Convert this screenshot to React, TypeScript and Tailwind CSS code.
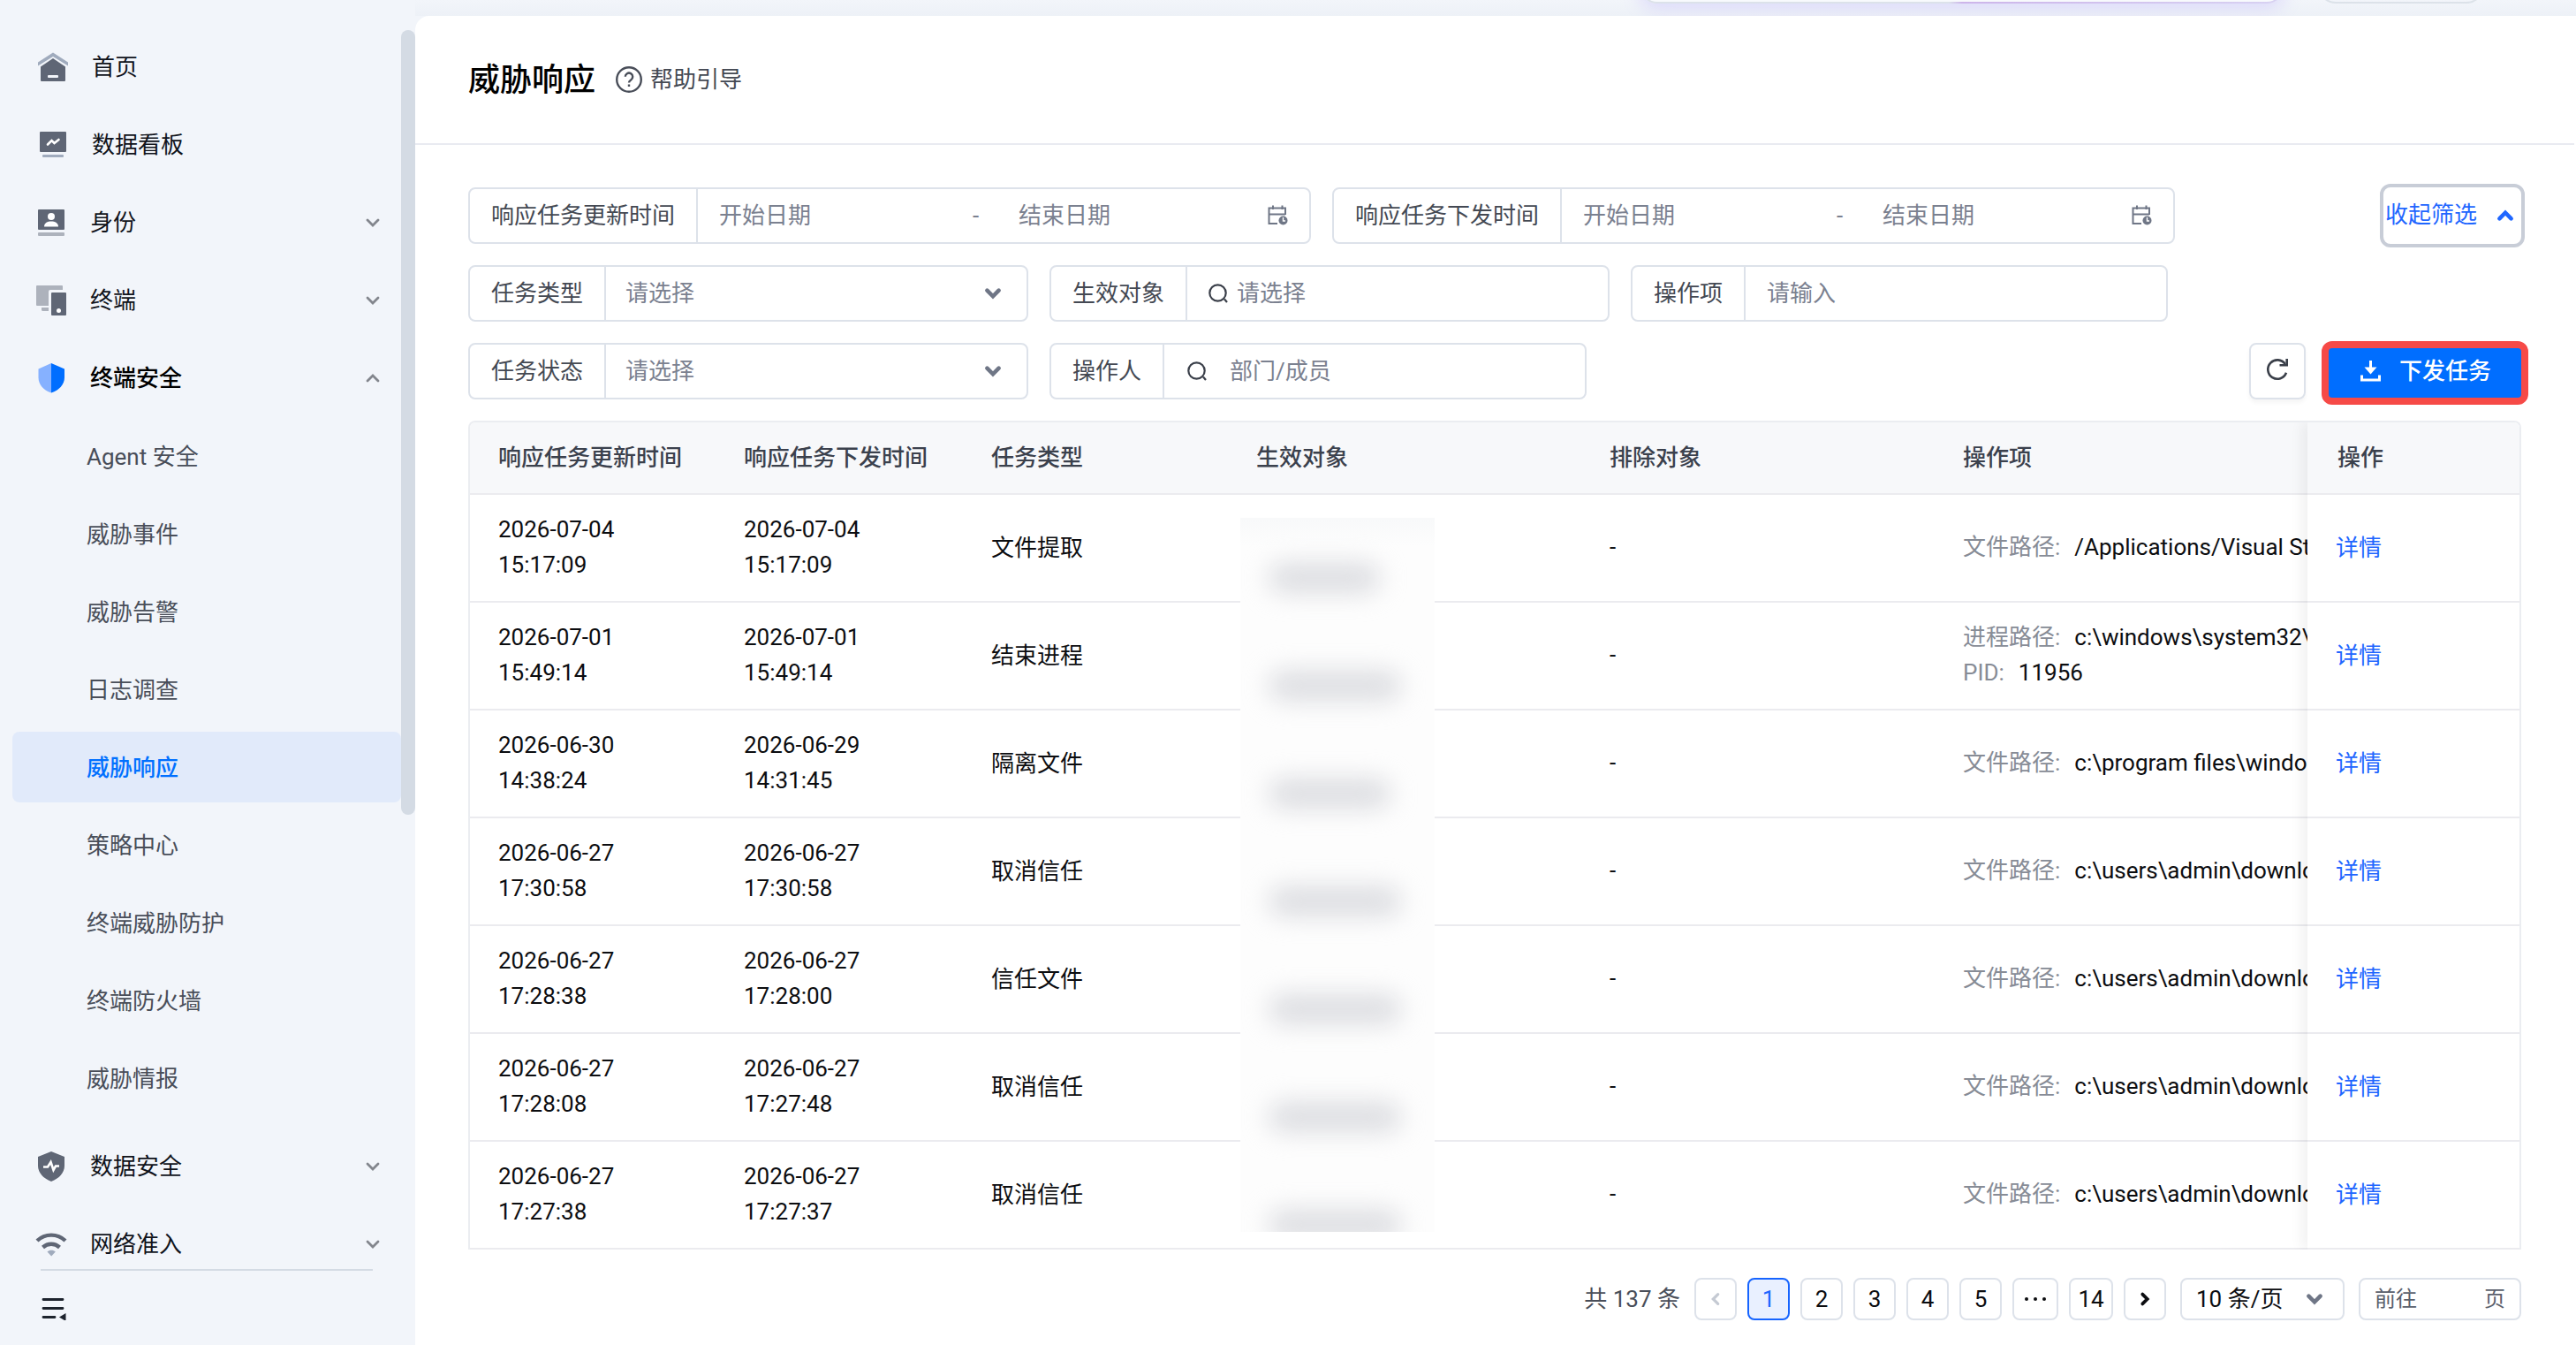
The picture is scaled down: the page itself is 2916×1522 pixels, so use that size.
import { clsx } from "clsx";

const SUB_ITEMS = ["Agent 安全", "威胁事件", "威胁告警", "日志调查", "威胁响应", "策略中心", "终端威胁防护", "终端防火墙", "威胁情报"];

type Pair = [string, string];

type Row = {
    updated: Pair;
    issued: Pair;
    type: string;
    detail: Pair[];
};

const ROWS: Row[] = [
    { updated: ["2026-07-04", "15:17:09"], issued: ["2026-07-04", "15:17:09"], type: "文件提取", detail: [["文件路径:", "/Applications/Visual St"]] },
    { updated: ["2026-07-01", "15:49:14"], issued: ["2026-07-01", "15:49:14"], type: "结束进程", detail: [["进程路径:", "c:\\windows\\system32\\"], ["PID:", "11956"]] },
    { updated: ["2026-06-30", "14:38:24"], issued: ["2026-06-29", "14:31:45"], type: "隔离文件", detail: [["文件路径:", "c:\\program files\\windo"]] },
    { updated: ["2026-06-27", "17:30:58"], issued: ["2026-06-27", "17:30:58"], type: "取消信任", detail: [["文件路径:", "c:\\users\\admin\\downlo"]] },
    { updated: ["2026-06-27", "17:28:38"], issued: ["2026-06-27", "17:28:00"], type: "信任文件", detail: [["文件路径:", "c:\\users\\admin\\downlo"]] },
    { updated: ["2026-06-27", "17:28:08"], issued: ["2026-06-27", "17:27:48"], type: "取消信任", detail: [["文件路径:", "c:\\users\\admin\\downlo"]] },
    { updated: ["2026-06-27", "17:27:38"], issued: ["2026-06-27", "17:27:37"], type: "取消信任", detail: [["文件路径:", "c:\\users\\admin\\downlo"]] },
];

const MASK_WIDTHS = ["w-[126px]", "w-[150px]", "w-[138px]", "w-[150px]", "w-[150px]", "w-[150px]", "w-[150px]"];

const COLUMNS = "grid grid-cols-[278px_280px_300px_400px_400px_1fr]";

function Chevron({ className, up = false, width = 2 }: { className?: string; up?: boolean; width?: number }) {
    return (
        <svg viewBox="0 0 20 20" fill="none" stroke="currentColor" strokeWidth={width} strokeLinecap="round" strokeLinejoin="miter" className={clsx("shrink-0", className)}>
            <path d={up ? "M4 13L10 7L16 13" : "M4 7L10 13L16 7"} />
        </svg>
    );
}

/* ---------- sidebar icons, all on a 36px box ---------- */

function HomeIcon() {
    return (
        <svg viewBox="0 0 36 36" className="size-9">
            <path d="M1 16.500V12.500L18 1.500L35 12.500V16.500L18 6Z" fill="#a0abbd" />
            <path d="M4 17.500L18 8L32 17.500V33a1 1 0 0 1-1 1H5a1 1 0 0 1-1-1Z" fill="#5f6675" />
            <rect x="12" y="27" width="12" height="3" rx="1" fill="#f2f5fa" />
        </svg>
    );
}

function BoardIcon() {
    return (
        <svg viewBox="0 0 36 36" className="size-9">
            <rect x="3" y="3" width="30" height="23" rx="1" fill="#5f6675" />
            <path d="M12 17.500L16.500 13L19.500 16L24.500 12" fill="none" stroke="#fff" strokeWidth="2.600" strokeLinecap="round" />
            <rect x="6" y="29" width="24" height="3" rx="1" fill="#a0abbd" />
        </svg>
    );
}

function IdentityIcon() {
    return (
        <svg viewBox="0 0 36 36" className="size-9">
            <rect x="3" y="3" width="30" height="23" rx="1" fill="#5f6675" />
            <circle cx="18" cy="11" r="4" fill="#fff" />
            <path d="M10 22.500c0-4 3.500-6 8-6s8 2 8 6Z" fill="#fff" />
            <rect x="3" y="29" width="30" height="4" rx="1" fill="#adb2bc" />
        </svg>
    );
}

function DeviceIcon() {
    return (
        <svg viewBox="0 0 36 36" className="size-9">
            <path d="M2 1H30a1 1 0 0 1 1 1V6H17a2 2 0 0 0-2 2V24H2a1 1 0 0 1-1-1V2A1 1 0 0 1 2 1Z" fill="#adb2bc" />
            <path d="M7 26H15V30H8.500A1.500 1.500 0 0 1 7 28.500Z" fill="#adb2bc" />
            <rect x="18" y="9" width="17" height="26" rx="1" fill="#5f6675" />
            <circle cx="26.500" cy="29.500" r="2.500" fill="#fff" />
        </svg>
    );
}

function ShieldIcon() {
    return (
        <svg viewBox="0 0 36 36" className="size-9">
            <path d="M18 1L3.500 7.500V17C3.500 25 9 31.500 18 34.500Z" fill="#86b1ff" />
            <path d="M18 1L33 7.500V17C33 25 27 31.500 18 34.500Z" fill="#006eff" />
        </svg>
    );
}

function DataShieldIcon() {
    return (
        <svg viewBox="0 0 36 36" className="size-9">
            <path d="M18 1L33 7V17C33 25 27 31.500 18 35C9 31.500 3 25 3 17V7Z" fill="#5f6675" />
            <path d="M9 18.500H14L17.500 13L20.500 22L23 17.500H27" fill="none" stroke="#fff" strokeWidth="2.600" />
        </svg>
    );
}

function WifiIcon() {
    return (
        <svg viewBox="0 0 36 36" className="size-9">
            <path d="M2 14C11 5.500 25 5.500 34 14" fill="none" stroke="#5f6675" strokeWidth="4.400" />
            <path d="M8.500 21.500C14 16.500 22 16.500 27.500 21.500" fill="none" stroke="#5f6675" strokeWidth="4.400" />
            <path d="M13.500 26.500C16 24 20.500 24 22.800 26.500L18.200 31.500Z" fill="#a0abbd" />
        </svg>
    );
}

function NavItem({ icon, label, arrow, bold, className = "pl-10" }: { icon: React.ReactNode; label: string; arrow?: "up" | "down"; bold?: boolean; className?: string }) {
    return (
        <div className={clsx("flex h-[88px] items-center gap-[26px] pr-[22px] text-[#10131b]", className)}>
            {icon}
            <span className={clsx("flex-1", bold && "font-medium text-black")}>{label}</span>
            {arrow && <Chevron up={arrow === "up"} className="size-5 text-[#83868d]" width={2.8} />}
        </div>
    );
}

function Sidebar() {
    return (
        <aside className="flex w-[470px] shrink-0 flex-col">
            <div className="flex h-[1436px] overflow-hidden pt-8">
                <nav className="w-[454px]">
                    <NavItem icon={<HomeIcon />} label="首页" className="pl-[42px]" />
                    <NavItem icon={<BoardIcon />} label="数据看板" className="pl-[42px]" />
                    <NavItem icon={<IdentityIcon />} label="身份" arrow="down" />
                    <NavItem icon={<DeviceIcon />} label="终端" arrow="down" />
                    <NavItem icon={<ShieldIcon />} label="终端安全" arrow="up" bold />
                    <div className="flex flex-col gap-2 pb-4 pl-3.5 pt-1">
                        {SUB_ITEMS.map((item) => (
                            <div
                                key={item}
                                className={clsx(
                                    "flex h-20 items-center rounded-lg pl-[84px] pt-0.5",
                                    item === "威胁响应" ? "bg-[#e1eafa] font-medium text-[#0070ff]" : "text-[#494e59]"
                                )}
                            >
                                {item}
                            </div>
                        ))}
                    </div>
                    <NavItem icon={<DataShieldIcon />} label="数据安全" arrow="down" />
                    <NavItem icon={<WifiIcon />} label="网络准入" arrow="down" />
                </nav>
                <div className="mt-0.5 h-[888px] w-4 rounded-full bg-[#d4dbe4]" />
            </div>
            <div className="ml-[46px] h-0.5 w-[376px] bg-[#d4dbe4]" />
            <svg viewBox="0 0 28 28" className="ml-[47px] mt-7 size-7 text-[#1d232d]">
                <path d="M2 4.500H24M2 14.500H24M2 24.500H15" stroke="currentColor" strokeWidth="2.800" strokeLinecap="round" />
                <path d="M20 24.500L27.500 20V29Z" fill="currentColor" />
            </svg>
        </aside>
    );
}

function CalendarIcon() {
    return (
        <svg viewBox="0 0 24 24" fill="none" stroke="#6f7686" strokeWidth="2" className="size-6">
            <path d="M21 11V3.500H2.500V21H12M2.500 10.500H21M7 0.500V5M17.500 0.500V5" />
            <circle cx="18.500" cy="17.500" r="5" fill="#6f7686" stroke="none" />
            <path d="M18.500 14V18H21" stroke="#fff" strokeWidth="1.400" />
        </svg>
    );
}

function SearchIcon() {
    return (
        <svg viewBox="0 0 24 24" fill="none" stroke="#3a3f49" strokeWidth="2.200" className="size-6">
            <circle cx="10.500" cy="11.500" r="9.200" />
            <path d="M18 18.500L21 22" />
        </svg>
    );
}

function Field({ label, children, className }: { label: string; children: React.ReactNode; className?: string }) {
    return (
        <div className="flex h-16 rounded-lg border-2 border-[#dde2ea]">
            <div className="border-r-2 border-[#dde2ea] px-6 leading-[60px] text-[#444953]">{label}</div>
            <div className={clsx("flex items-center leading-[58px] text-[#7b8190]", className)}>{children}</div>
        </div>
    );
}

function DateRange({ label }: { label: string }) {
    return (
        <Field label={label} className="w-[692px] px-6">
            <span className="w-[287px]">开始日期</span>
            <span className="w-[52px]">-</span>
            <span className="flex-1">结束日期</span>
            <CalendarIcon />
        </Field>
    );
}

function SelectField({ label }: { label: string }) {
    return (
        <Field label={label} className="w-[476px] pl-[22px] pr-[27px]">
            <span className="flex-1">请选择</span>
            <Chevron className="size-[22px] text-[#6f7686]" width={4.2} />
        </Field>
    );
}

function Filters() {
    return (
        <div className="flex justify-between pt-12">
            <div className="flex flex-col gap-6">
                <div className="flex gap-6">
                    <DateRange label="响应任务更新时间" />
                    <DateRange label="响应任务下发时间" />
                </div>
                <div className="flex gap-6">
                    <SelectField label="任务类型" />
                    <Field label="生效对象" className="w-[476px] gap-2 pl-6">
                        <SearchIcon />
                        <span>请选择</span>
                    </Field>
                    <Field label="操作项" className="w-[476px] pl-6">
                        请输入
                    </Field>
                </div>
                <div className="flex gap-6">
                    <SelectField label="任务状态" />
                    <Field label="操作人" className="w-[476px] gap-6 pl-[26px]">
                        <SearchIcon />
                        <span>部门/成员</span>
                    </Field>
                </div>
            </div>
            <div className="-mr-2 -mt-1 flex flex-col items-end justify-between">
                <button className="mr-1 flex h-[72px] w-[164px] items-center rounded-xl border-4 border-[#c8cdd7] pl-0.5 text-[#1f66ff]">
                    <span className="-mt-0.5 flex-1 text-left">收起筛选</span>
                    <Chevron up className="mr-[7px] size-[22px]" width={4.2} />
                </button>
                <div className="-mb-1.5 flex items-center gap-[18px]">
                    <button className="-mt-1 flex size-16 items-center justify-center rounded-lg border-2 border-[#dde2ea] shadow-[0_4px_4px_rgba(0,0,0,0.04)]">
                        <svg viewBox="0 0 28 28" fill="none" stroke="#3a3f49" strokeWidth="2.600" className="-mt-1 size-7">
                            <path d="M24 17.800A10.700 10.700 0 1 1 22.800 8" />
                            <path d="M24.700 2V9.300H16.500" />
                        </svg>
                    </button>
                    <button className="flex h-[72px] w-[234px] items-center rounded-xl border-8 border-[#f64a47] bg-[#006eff] pb-1 pl-[35px] font-medium text-white">
                        <svg viewBox="0 0 24 24" fill="none" stroke="currentColor" strokeWidth="3" className="mr-[21px] size-6">
                            <path d="M12.500 0V12M2.500 16.500V22H22.500V16.500" />
                            <path d="M5.500 7.500L12.500 15.500L19.500 7.500Z" fill="currentColor" stroke="none" />
                        </svg>
                        下发任务
                    </button>
                </div>
            </div>
        </div>
    );
}

function Table() {
    return (
        <div className="relative mt-6 flex overflow-hidden rounded-t-lg border-2 border-b-0 border-[#ebedf1]">
            <div className="w-[2080px] overflow-hidden">
                <div className={clsx(COLUMNS, "h-[82px] border-b-2 border-[#ebebef] bg-[#f7f8fa] font-medium leading-[80px] text-[#3b414d]")}>
                    {["响应任务更新时间", "响应任务下发时间", "任务类型", "生效对象", "排除对象", "操作项"].map((title) => (
                        <div key={title} className="pl-8">{title}</div>
                    ))}
                </div>
                {ROWS.map((row, index) => (
                    <div key={index} className={clsx(COLUMNS, "h-[122px] items-center border-b-2 border-[#ebebef] pb-0.5 leading-10 text-[#0c0d10]")}>
                        <div className="pl-8">
                            {row.updated.map((part) => <div key={part}>{part}</div>)}
                        </div>
                        <div className="pl-8">
                            {row.issued.map((part) => <div key={part}>{part}</div>)}
                        </div>
                        <div className="pl-8 pt-0.5">{row.type}</div>
                        <div />
                        <div className="pl-8">-</div>
                        <div className="overflow-hidden whitespace-nowrap pl-8">
                            {row.detail.map(([name, value]) => (
                                <div key={name} className="flex gap-4">
                                    <span className="text-[#878c96]">{name}</span>
                                    <span>{value}</span>
                                </div>
                            ))}
                        </div>
                    </div>
                ))}
            </div>

            {/* masked names over the 生效对象 column */}
            <div className="absolute left-[872px] top-[108px] h-[808px] w-[220px] overflow-hidden bg-linear-to-b from-[#f8f9fa] via-[#fdfdfd] via-[4%] to-[#fdfdfd]">
                <div className="flex flex-col gap-[88px] pl-8 pt-[51px]">
                    {MASK_WIDTHS.map((width, index) => (
                        <div key={index} className={clsx("h-[34px] shrink-0 rounded-full bg-[#dcdde1] blur-[14px]", width)} />
                    ))}
                </div>
            </div>

            {/* fixed action column */}
            <div className="relative w-60 bg-white shadow-[-6px_0_14px_rgba(0,0,0,0.06)]">
                <div className="h-[82px] border-b-2 border-[#ebebef] bg-[#f7f8fa] pl-[34px] font-medium leading-[80px] text-[#3b414d]">操作</div>
                {ROWS.map((row, index) => (
                    <div key={index} className="h-[122px] border-b-2 border-[#ebebef] pl-8 leading-[120px] text-[#1f66ff]">详情</div>
                ))}
            </div>
        </div>
    );
}

function Pagination() {
    const box = "flex h-12 items-center rounded-lg border-2";
    return (
        <div className="mt-8 flex justify-end text-[#0c0d10]">
            <span className="mr-4 leading-[48px] text-[#494e59]">共 137 条</span>
            <div className="flex gap-3">
                <div className={clsx(box, "w-12 justify-center border-[#dde2ea]")}>
                    <Chevron className="size-[18px] rotate-90 text-[#c5cad3]" width={3.6} />
                </div>
                <div className={clsx(box, "w-12 justify-center border-[#1664ff] bg-[#e9f0ff] text-[#1f66ff]")}>1</div>
                {["2", "3", "4", "5"].map((page) => (
                    <div key={page} className={clsx(box, "w-12 justify-center border-[#dde2ea]")}>{page}</div>
                ))}
                <div className={clsx(box, "w-[52px] justify-center gap-[6px] border-[#dde2ea]")}>
                    <i className="size-1 rounded-full bg-[#0c0d10]" />
                    <i className="size-1 rounded-full bg-[#0c0d10]" />
                    <i className="size-1 rounded-full bg-[#0c0d10]" />
                </div>
                <div className={clsx(box, "w-[50px] justify-center border-[#dde2ea]")}>14</div>
                <div className={clsx(box, "w-12 justify-center border-[#dde2ea]")}>
                    <Chevron className="size-[18px] -rotate-90" width={4.2} />
                </div>
            </div>
            <div className={clsx(box, "ml-4 w-[186px] justify-between border-[#dde2ea] pl-4 pr-[21px]")}>
                10 条/页
                <Chevron className="size-[22px] text-[#6f7686]" width={4.2} />
            </div>
            <div className={clsx(box, "ml-4 w-[184px] justify-between border-[#dde2ea] px-4 text-2xl text-[#5a606c]")}>
                <span>前往</span>
                <span>页</span>
            </div>
        </div>
    );
}

export default function App() {
    return (
        <div className="flex h-[1522px] w-[2916px] overflow-hidden bg-[#f2f5fa] font-[Roboto,'Noto_Sans_CJK_SC',sans-serif] text-[26px]">
            <Sidebar />
            <div className="flex flex-1 flex-col">
                {/* lower edge of the top bar */}
                <div className="flex h-[18px] shrink-0 items-start overflow-hidden bg-linear-to-b from-[#f2f5fa] to-[#edf1f7] pl-[1386px]">
                    <div className="-mt-[60px] h-16 w-[730px] rounded-[20px] bg-linear-to-r from-[#dce2ea] from-48% via-[#cdb5ea] via-50% to-[#d8d2f2] p-0.5 shadow-[0_6px_20px_rgba(160,140,255,0.25)]">
                        <div className="h-full rounded-[18px] bg-[#f8fafd]" />
                    </div>
                    <div className="-mt-[60px] ml-[38px] h-16 w-[188px] rounded-[20px] border-2 border-[#dce2e9]" />
                </div>
                <main className="flex-1 rounded-tl-2xl bg-white">
                    <header className="mr-0.5 flex h-[146px] items-center border-b-2 border-[#e9ebf1] pl-[60px]">
                        <h1 className="pt-0.5 text-4xl font-medium text-black">威胁响应</h1>
                        <svg viewBox="0 0 32 32" fill="none" stroke="#494e59" strokeWidth="2.400" className="ml-[22px] size-8">
                            <circle cx="16" cy="16" r="13.800" />
                            <path d="M11.800 12.800a4.200 4.200 0 1 1 6.400 3.600c-1.500.9-2.200 1.600-2.200 3.200" />
                            <path d="M16 21.500v2.500" />
                        </svg>
                        <span className="ml-2 text-[#444953]">帮助引导</span>
                    </header>
                    <div className="w-[2384px] pl-[60px]">
                        <Filters />
                        <Table />
                        <Pagination />
                    </div>
                </main>
            </div>
        </div>
    );
}
